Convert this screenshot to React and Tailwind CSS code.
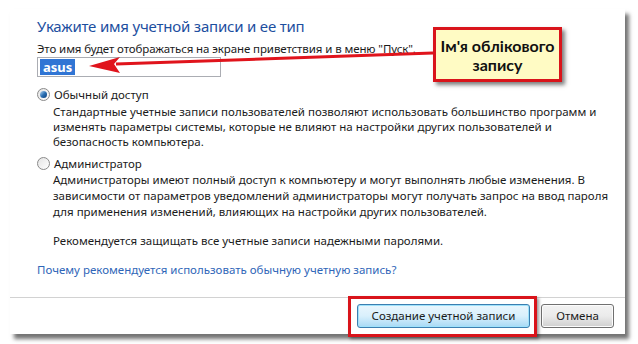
import React from "react";

const ui = { fontFamily: '"Noto Sans", "Open Sans", sans-serif' };

function Radio({ checked }) {
  return (
    <span className="relative inline-flex h-[13px] w-[13px] shrink-0 items-center justify-center rounded-full border border-[#8a8a8a] bg-gradient-to-br from-[#e4e4e4] to-[#ffffff]">
      {checked && (
        <span className="h-[7px] w-[7px] rounded-full bg-gradient-to-br from-[#b6d9f2] via-[#2c71b4] to-[#0b3d7a]" />
      )}
    </span>
  );
}

export default function App() {
  return (
    <div className="relative h-[344px] w-[638px] overflow-hidden bg-white" style={ui}>
      <div className="pl-[10px] pt-[9px]">
        <div className="flex h-[325px] w-[615px] flex-col bg-white shadow-[4px_5px_4px_rgba(0,0,0,0.55)]">
          <div className="flex-1 pl-[27px] pt-[7px] text-[11.5px] leading-[15px] text-[#1b1b1b]">
            <h1 className="text-[15px] leading-[20px] tracking-[-0.2px] text-[#1d4f9f]">
              Укажите имя учетной записи и ее тип
            </h1>
            <p className="mt-[5px] leading-[16px] tracking-[-0.1px]">
              Это имя будет отображаться на экране приветствия и в меню "Пуск".
            </p>
            <div className="flex h-[20px] w-[184px] items-center border border-[#abadb3] pl-[2px]">
              <span className="flex h-[16px] items-center bg-[#3075d4] px-[3px] text-[13px] font-bold text-white">
                asus
              </span>
            </div>

            <label className="mt-[9px] flex h-[16px] items-center gap-[4px]">
              <Radio checked />
              <span>Обычный доступ</span>
            </label>
            <p className="mt-[2px] whitespace-nowrap pl-[16px]">
              Стандартные учетные записи пользователей позволяют использовать большинство программ и
              <br />
              изменять параметры системы, которые не влияют на настройки других пользователей и
              <br />
              безопасность компьютера.
            </p>

            <label className="mt-[6px] flex h-[16px] items-center gap-[4px]">
              <Radio />
              <span>Администратор</span>
            </label>
            <p className="mt-[1px] whitespace-nowrap pl-[16px] leading-[16px]">
              Администраторы имеют полный доступ к компьютеру и могут выполнять любые изменения. В
              <br />
              зависимости от параметров уведомлений администраторы могут получать запрос на ввод пароля
              <br />
              для применения изменений, влияющих на настройки других пользователей.
            </p>
            <p className="mt-[13px] pl-[16px]">
              Рекомендуется защищать все учетные записи надежными паролями.
            </p>
            <a className="mt-[14px] block text-[#2f66b8]">
              Почему рекомендуется использовать обычную учетную запись?
            </a>
          </div>

          <div className="flex h-[37px] items-center justify-end gap-[11px] border-t border-[#d2d2d2] pr-[11px] text-[11.5px] text-[#1b1b1b]">
            <button className="h-[24px] w-[173px] rounded-[3px] border border-[#3c7fb1] bg-gradient-to-b from-[#eaf6fd] via-[#d9f0fc] to-[#a7d9f5] shadow-[inset_0_0_0_1px_#9fe2fb]">
              Создание учетной записи
            </button>
            <button className="h-[24px] w-[73px] rounded-[3px] border border-[#707070] bg-gradient-to-b from-[#f2f2f2] via-[#ebebeb] to-[#cfcfcf] shadow-[inset_0_0_0_1px_#fcfcfc]">
              Отмена
            </button>
          </div>
        </div>
      </div>

      {/* annotation: arrow */}
      <svg className="pointer-events-none absolute left-0 top-0" width="638" height="344">
        <path d="M433 53 Q 300 58 116 64" fill="none" stroke="#e0141c" strokeWidth="3" />
        <polygon points="89,66 120,57 114,64 120,73" fill="#e0141c" />
      </svg>

      {/* annotation: callout */}
      <div className="absolute left-[433px] top-[27px] flex h-[55px] w-[129px] flex-col items-center justify-center border-[3px] border-[#d9141b] bg-[#fffbc4] text-center text-[16px] font-bold leading-[19px] text-[#111] shadow-[3px_3px_4px_rgba(0,0,0,0.5)]" style={{ fontFamily: 'Lato, "Noto Sans", sans-serif' }}>
        <span>Ім'я облікового</span>
        <span>запису</span>
      </div>

      {/* annotation: highlight on button */}
      <div className="absolute left-[348px] top-[296px] h-[41px] w-[189px] border-[3px] border-[#d9141b] shadow-[2px_2px_3px_rgba(0,0,0,0.4)]" />
    </div>
  );
}
